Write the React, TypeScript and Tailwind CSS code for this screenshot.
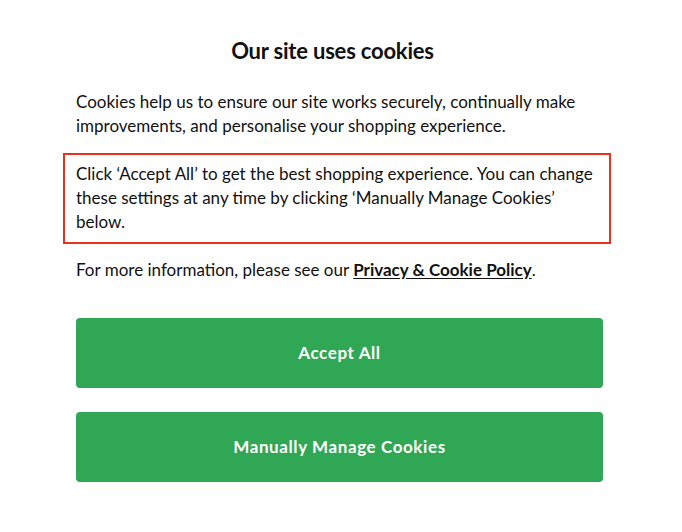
export default function App() {
  return (
    <div className="min-h-[532px] w-full bg-white text-[#111] font-['Lato','Noto_Sans',sans-serif]">
      <div className="ml-[76px] w-[527px] pt-[37px]">
        {/* heading */}
        <h1 className="pr-[14px] text-center text-[22px] font-bold leading-[28px] tracking-[-0.2px]">
          Our site uses cookies
        </h1>

        <p className="mt-[25px] text-[17px] leading-[24px]">
          Cookies help us to ensure our site works securely, continually make improvements, and
          personalise your shopping experience.
        </p>

        {/* highlighted note */}
        <div className="mt-[15px] ml-[-13px] mr-[-8px] border-2 border-[#e8321e] pl-[11px] pr-[6px] pt-[7px] pb-[8px]">
          <p className="text-[17px] leading-[24px]">
            Click ‘Accept All’ to get the best shopping experience. You can change these settings at
            any time by clicking ‘Manually Manage Cookies’ below.
          </p>
        </div>

        <p className="mt-[14px] text-[17px] leading-[24px]">
          For more information, please see our{" "}
          <a href="#" className="font-bold underline underline-offset-2">
            Privacy &amp; Cookie Policy
          </a>
          .
        </p>

        {/* actions */}
        <div className="mt-[36px] flex flex-col gap-[24px]">
          <button className="h-[70px] w-full rounded-[4px] bg-[#2fa754] text-[17px] font-bold tracking-[0.6px] text-white">
            Accept All
          </button>
          <button className="h-[70px] w-full rounded-[4px] bg-[#2fa754] text-[17px] font-bold tracking-[0.6px] text-white">
            Manually Manage Cookies
          </button>
        </div>
      </div>
    </div>
  );
}
